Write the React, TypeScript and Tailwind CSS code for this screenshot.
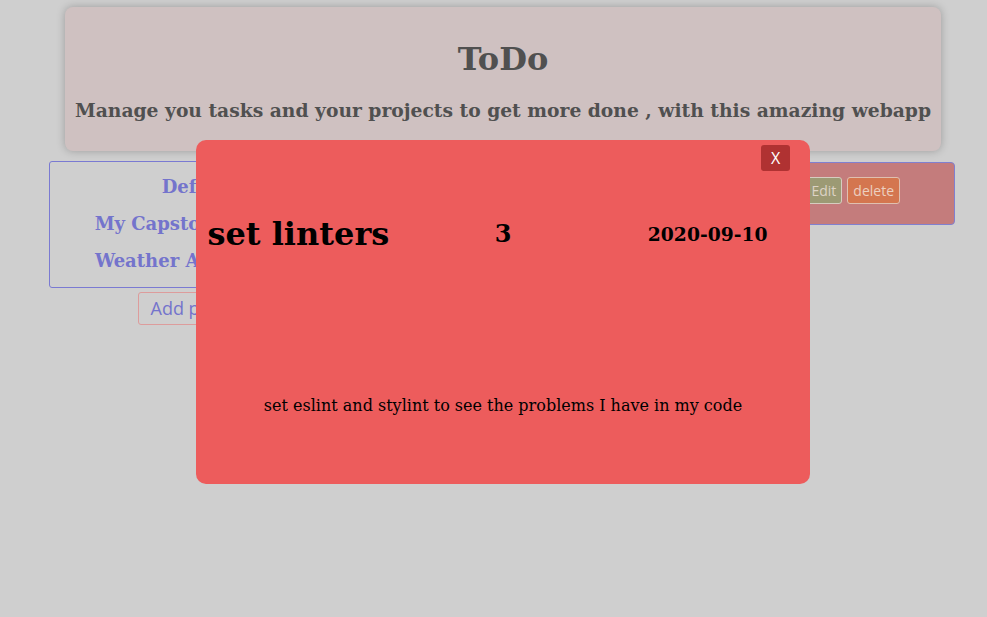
import React from 'react';

const projects = ['Default', 'My Capstone Project', 'Weather App Project'];

export default function App() {
  return (
    <div className="relative min-h-screen w-full bg-[#cfcfcf] font-['DejaVu_Serif',serif] pt-[7px]">
      {/* Header */}
      <header className="ml-[65px] w-[876px] h-[144px] rounded-[8px] bg-[#cfc1c1] shadow-[0_0_8px_rgba(0,0,0,0.25)] text-center text-[#505050] pt-[32px]">
        <h1 className="text-[32px] leading-[40px] font-bold">ToDo</h1>
        <h3 className="mt-[17px] text-[18.72px] leading-[28px] font-bold">
          Manage you tasks and your projects to get more done , with this amazing webapp
        </h3>
      </header>

      {/* Projects + tasks */}
      <div className="ml-[49px] w-[906px] mt-[10px] flex gap-4 items-start">
        <div className="w-[300px] shrink-0 flex flex-col items-center">
          <div className="w-full border border-[#7a7ad2] rounded-[3px] pt-[6px] pb-[8px] text-center">
            {projects.map((p) => (
              <h3 key={p} className="text-[18px] leading-[37px] font-bold text-[#7474cc] whitespace-nowrap">
                {p}
              </h3>
            ))}
          </div>
          <button className="mt-[4px] h-[33px] px-3 border border-[#dd9c9c] rounded-[3px] font-['Open_Sans',sans-serif] text-[18px] text-[#7474cc]">
            Add project
          </button>
        </div>

        <div className="flex-1 mt-[1px] h-[63px] rounded-[4px] border border-[#8080d0] bg-[#c47c7c] flex items-start justify-end pt-[14px] pr-[54px] gap-[5px]">
          <button className="h-[27px] px-[5px] rounded-[3px] border border-[#d6cdc0] bg-[#9c9a74] font-['Open_Sans',sans-serif] text-[14px] text-[#ddd3c5]">
            Edit
          </button>
          <button className="h-[27px] px-[5px] rounded-[3px] border border-[#e0c0b0] bg-[#d4764f] font-['Open_Sans',sans-serif] text-[14px] text-[#ecd0c0]">
            delete
          </button>
        </div>
      </div>

      {/* Task modal */}
      <div className="absolute left-[196px] top-[140px] w-[614px] h-[344px] rounded-[10px] bg-[#ed5c5c] text-black">
        <button className="absolute top-[5px] right-[20px] w-[29px] h-[26px] rounded-[3px] bg-[#b03232] text-white font-['Open_Sans',sans-serif] text-[16px] leading-[26px]">
          X
        </button>
        <div className="pt-[72px] grid grid-cols-3 items-center text-center">
          <h1 className="text-[32px] leading-[44px] font-bold">set linters</h1>
          <h2 className="text-[24px] leading-[44px] font-bold">3</h2>
          <h3 className="text-[18.72px] leading-[44px] font-bold">2020-09-10</h3>
        </div>
        <p className="mt-[138px] text-center text-[16px] leading-[24px]">
          set eslint and stylint to see the problems I have in my code
        </p>
      </div>
    </div>
  );
}
